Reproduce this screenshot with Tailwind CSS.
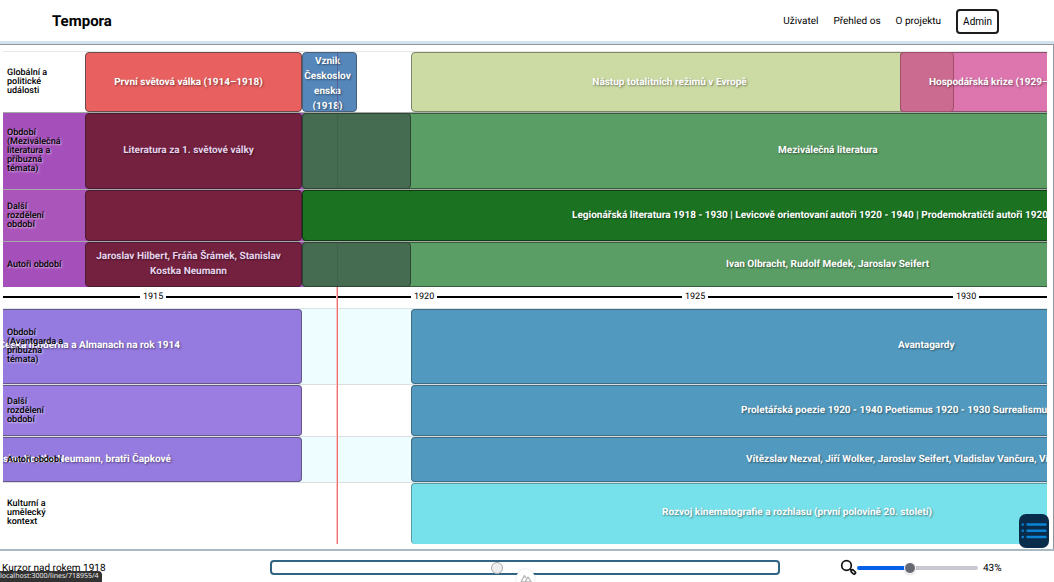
<!DOCTYPE html>
<html lang="cs">
<head>
<meta charset="utf-8">
<meta name="viewport" content="width=device-width, initial-scale=1">
<title>Tempora</title>
<script src="https://cdn.jsdelivr.net/npm/@tailwindcss/browser@4"></script>
</head>
<body class="relative flex h-screen flex-col overflow-hidden bg-white font-[Roboto,sans-serif] text-[10px] text-black [text-rendering:geometricPrecision]">
<header class="flex h-[44px] shrink-0 items-center justify-between border-b-3 border-[#d3e3ee] pt-[2px] pr-[55px] pl-[52px]">
  <a href="#" class="text-[15px] font-bold">Tempora</a>
  <nav class="flex items-center gap-[15px]">
    <a href="#">Uživatel</a>
    <a href="#">Přehled os</a>
    <a href="#">O projektu</a>
    <button class="h-[25px] rounded border-2 border-[#1c1c1c] px-[5px]">Admin</button>
  </nav>
</header>

<main class="min-h-0 flex-1 border-t border-r border-[#8f979c] pt-[6px] pr-[6px] pl-[3px]">
  <div class="relative overflow-hidden font-bold text-white leading-[15px] text-shadow-[1px_1px_2px_rgb(0_0_0/0.45)]">
    <section class="relative grid h-[61px] grid-cols-[82px_217px_55px_54px_489px_54px_1fr] border-t border-[#e8e8e8]">
      <h2 class="absolute inset-y-0 left-[4px] flex w-[60px] items-center pt-px text-[9px] leading-[9px] font-medium text-black text-shadow-none">Globální a politické události</h2>
      <div class="col-start-2 row-start-1 flex items-center justify-center rounded border border-[#6b4a4c] bg-[#e86060] pr-[10px] text-center">První světová válka (1914–1918)</div>
      <div class="relative col-start-3 row-start-1 overflow-hidden rounded border border-[#48607a] bg-[#5587ba] pt-px text-center"><span class="absolute inset-y-0 left-[34px] w-px bg-[#5a4a80]/60"></span><p class="h-[56px] overflow-hidden pr-[4px]">Vznik<br>Českoslov<br>enska<br>(1918)</p></div>
      <div class="col-span-2 col-start-5 row-start-1 flex items-center justify-center rounded border border-[#7d8568] bg-[#ccdba4] pr-[26px]">Nástup totalitních režimů v Evropě</div>
      <div class="col-span-2 col-start-6 row-start-1 rounded-l border border-r-0 border-[#85516d] bg-[#dd75ae]"></div>
      <div class="col-start-6 row-start-1 rounded border border-[#a14d6c] bg-[#cb6b8f]"></div>
      <div class="col-span-2 col-start-6 row-start-1 flex items-center overflow-hidden pl-[29px] whitespace-nowrap">Hospodářská krize (1929–1933)</div>
    </section>

    <section class="relative grid h-[77px] grid-cols-[82px_217px_109px_1fr] border-t border-[#a6aaa6] bg-[#a550ba]">
      <h2 class="absolute inset-y-0 left-[4px] flex w-[60px] items-center text-[9px] leading-[9px] font-medium text-black text-shadow-[1px_1px_2px_rgb(255_255_255/0.6)]">Období (Meziválečná literatura a příbuzná témata)</h2>
      <div class="col-start-2 row-start-1 flex items-center justify-center rounded border border-[#4b1b35] bg-[#74213f] pr-[10px] pb-[2px] text-[#e6d3ec]">Literatura za 1. světové války</div>
      <div class="col-span-2 col-start-3 row-start-1 flex items-center rounded-l border border-r-0 border-[#355c3b] bg-[#5a9e65] pb-[2px] pl-[475px] whitespace-nowrap">Meziválečná literatura</div>
      <div class="relative col-start-3 row-start-1 rounded border border-[#2d4535] bg-[#456b50]"><span class="absolute inset-y-0 left-[34px] w-px bg-[#40604a]"></span></div>
    </section>

    <section class="relative grid h-[52px] grid-cols-[82px_217px_1fr] border-t border-[#a6aaa6] bg-[#aa55ba]">
      <h2 class="absolute inset-y-0 left-[4px] flex w-[50px] items-center pt-px text-[9px] leading-[9px] font-medium text-black text-shadow-[1px_1px_2px_rgb(255_255_255/0.6)]">Další rozdělení období</h2>
      <div class="col-start-2 row-start-1 rounded border border-[#4b1b35] bg-[#77213f]"></div>
      <div class="col-start-3 row-start-1 flex items-center overflow-hidden rounded-l border border-r-0 border-[#0e3b13] bg-[#1b7322] pl-[269px] whitespace-nowrap">Legionářská literatura 1918 - 1930 | Levicově orientovaní autoři 1920 - 1940 | Prodemokratičtí autoři 1920 - 1940</div>
    </section>

    <section class="relative grid h-[46px] grid-cols-[82px_217px_109px_1fr] border-t border-[#a6aaa6] bg-[#a550ba]">
      <h2 class="absolute inset-y-0 left-[4px] flex w-[60px] items-center pt-px text-[9px] leading-[9px] font-medium text-black text-shadow-[1px_1px_2px_rgb(255_255_255/0.6)]">Autoři období</h2>
      <div class="col-start-2 row-start-1 flex items-center justify-center rounded border border-[#4b1b35] bg-[#74213f] pr-[14px] pb-px pl-[4px] text-center text-[#e6d3ec]">Jaroslav Hilbert, Fráňa Šrámek, Stanislav Kostka Neumann</div>
      <div class="col-span-2 col-start-3 row-start-1 flex items-center rounded-l border border-r-0 border-[#355c3b] bg-[#5a9e65] pl-[423px] whitespace-nowrap">Ivan Olbracht, Rudolf Medek, Jaroslav Seifert</div>
      <div class="relative col-start-3 row-start-1 rounded border border-[#2d4535] bg-[#456b50]"><span class="absolute inset-y-0 left-[34px] w-px bg-[#40604a]"></span></div>
    </section>

    <div class="relative">
      <ol class="grid h-[21px] grid-cols-[137px_271px_271px_271px_1fr] items-center pb-[2px] text-[9px] leading-[10px] font-normal text-black text-shadow-none">
        <li class="h-[2px] bg-black"></li>
        <li class="flex items-center gap-[3px] pl-[3px] after:h-[2px] after:flex-1 after:bg-black">1915</li>
        <li class="flex items-center gap-[3px] pl-[3px] after:h-[2px] after:flex-1 after:bg-black">1920</li>
        <li class="flex items-center gap-[3px] pl-[3px] after:h-[2px] after:flex-1 after:bg-black">1925</li>
        <li class="flex items-center gap-[3px] pl-[3px] after:h-[2px] after:flex-1 after:bg-black">1930</li>
      </ol>

      <section class="relative grid h-[76px] grid-cols-[299px_109px_1fr] border-t border-[#dde6e6] bg-[#eefdff]">
        <div class="flex items-center overflow-hidden rounded-r border border-l-0 border-[#645889] bg-[#957adf] pb-[3px]"><span class="flex w-[177px] shrink-0 justify-end whitespace-nowrap">Česká moderna a Almanach na rok 1914</span></div>
        <div class="col-start-3 flex items-center rounded-l border border-r-0 border-[#3f6c83] bg-[#5199be] pb-[3px] pl-[486px] whitespace-nowrap">Avantagardy</div>
        <h2 class="absolute inset-y-0 left-[4px] flex w-[60px] items-center text-[9px] leading-[9px] font-medium text-black text-shadow-[1px_1px_2px_rgb(255_255_255/0.6)]">Období (Avantgarda a příbuzná témata)</h2>
      </section>

      <section class="relative grid h-[52px] grid-cols-[299px_109px_1fr] border-t border-[#dcdfdf]">
        <div class="rounded-r border border-l-0 border-[#645889] bg-[#9b7ce0]"></div>
        <div class="col-start-3 flex items-center overflow-hidden rounded-l border border-r-0 border-[#3f6c83] bg-[#5199be] pl-[329px] whitespace-nowrap">Proletářská poezie 1920 - 1940 Poetismus 1920 - 1930 Surrealismus 1930 - 1940</div>
        <h2 class="absolute inset-y-0 left-[4px] flex w-[50px] items-center pt-px text-[9px] leading-[9px] font-medium text-black text-shadow-[1px_1px_2px_rgb(255_255_255/0.6)]">Další rozdělení období</h2>
      </section>

      <section class="relative grid h-[46px] grid-cols-[299px_109px_1fr] border-t border-[#dcdfdf] bg-[#eefdff]">
        <div class="flex items-center overflow-hidden rounded-r border border-l-0 border-[#645889] bg-[#957adf]"><span class="flex w-[168px] shrink-0 justify-end whitespace-nowrap">Stanislav Kostka Neumann, bratři Čapkové</span></div>
        <div class="col-start-3 flex items-center overflow-hidden rounded-l border border-r-0 border-[#3f6c83] bg-[#5199be] pl-[334px] whitespace-nowrap">Vítězslav Nezval, Jiří Wolker, Jaroslav Seifert, Vladislav Vančura, Vítězslav</div>
        <h2 class="absolute inset-y-0 left-[4px] flex w-[60px] items-center pt-px text-[9px] leading-[9px] font-medium text-black text-shadow-[1px_1px_2px_rgb(255_255_255/0.6)]">Autoři období</h2>
      </section>

      <section class="relative grid h-[62px] grid-cols-[408px_1fr] border-t border-[#dcdfdf]">
        <h2 class="absolute inset-y-0 left-[4px] flex w-[50px] items-center text-[9px] leading-[9px] font-medium text-black text-shadow-none">Kulturní a umělecký kontext</h2>
        <div class="col-start-2 flex items-center overflow-hidden rounded-l border border-r-0 border-b-0 border-[#5b9ca2] bg-[#76e1ea] pb-[3px] pl-[250px] whitespace-nowrap">Rozvoj kinematografie a rozhlasu (první polovině 20. století)</div>
      </section>
      <span class="absolute inset-y-0 left-[333px] w-[2px] border-r border-[#f07070] bg-[#fbc4c4]"></span>
    </div>
  </div>
</main>

<footer class="flex h-[33px] shrink-0 items-center border-t-2 border-[#a9b9c4] pt-[2px] pl-[2px]">
  <p class="w-[268px] shrink-0 pt-px">Kurzor nad rokem 1918</p>
  <input type="range" aria-label="Posun osy" min="0" max="1000" value="444" class="h-[15px] min-w-0 flex-1 appearance-none rounded border-2 border-[#2f6482] bg-white [&::-webkit-slider-thumb]:size-[12px] [&::-webkit-slider-thumb]:appearance-none [&::-webkit-slider-thumb]:rounded-full [&::-webkit-slider-thumb]:border [&::-webkit-slider-thumb]:border-[#a9a9a9] [&::-webkit-slider-thumb]:bg-[#efefef]">
  <label class="ml-[60px] flex w-[214px] shrink-0 items-center">
    <svg class="size-[17px]" viewBox="0 0 17 17" fill="none" stroke="#111"><circle cx="6.5" cy="6.5" r="4.8" stroke-width="1.7"/><path d="M10 10l1.5 1.5" stroke-width="1.7"/><rect x="10.8" y="11.6" width="5" height="2.8" rx="1.4" transform="rotate(45 13.3 13)" stroke-width="1.7"/></svg>
    <input type="range" aria-label="Přiblížení" min="0" max="100" value="43" class="h-[12px] w-[121px] appearance-none bg-transparent [&::-webkit-slider-runnable-track]:h-[4px] [&::-webkit-slider-runnable-track]:rounded-full [&::-webkit-slider-runnable-track]:bg-[linear-gradient(90deg,#0560e8_43%,#c8c8d2_43%)] [&::-webkit-slider-thumb]:mt-[-4px] [&::-webkit-slider-thumb]:size-[12px] [&::-webkit-slider-thumb]:appearance-none [&::-webkit-slider-thumb]:rounded-full [&::-webkit-slider-thumb]:border [&::-webkit-slider-thumb]:border-white [&::-webkit-slider-thumb]:bg-[#686873] [&::-webkit-slider-thumb]:shadow">
    <span class="ml-[5px] pt-px">43%</span>
  </label>
</footer>

<button aria-label="Seznam" class="absolute right-[5px] bottom-[34px] flex h-[34px] w-[30px] items-center justify-center rounded-[7px] bg-[#082c49]">
  <svg class="h-[20px] w-[26px]" viewBox="0 0 26 20" stroke="#0b84d6" stroke-width="2.4" stroke-linecap="round"><path d="M1.7 3.5h.1M6.5 3.5h18M1.7 9.7h.1M6.5 9.7h18M1.7 16h.1M6.5 16h18"/></svg>
</button>
<div class="absolute bottom-0 left-0 h-[11px] rounded-tr-sm bg-[#323232] pr-[3px] font-['Noto_Sans'] text-[7px] leading-[11px] text-[#ededed]">localhost:3000/lines/718955/4</div>
<button aria-label="Nuxt DevTools" class="absolute bottom-[-6px] left-1/2 flex size-[19px] -translate-x-[11px] justify-center rounded-full bg-white pt-[5px] shadow-[0_0_2px_rgb(0_0_0/0.2)]">
  <svg class="h-[9px] w-[12px]" viewBox="0 0 12 9" fill="none" stroke="#b5b5b5" stroke-width="1.3" stroke-linejoin="round"><path d="M5 8H1L4.4 1.5 6 4.2M5 8l3-5 3.3 5H5z"/></svg>
</button>
</body>
</html>
